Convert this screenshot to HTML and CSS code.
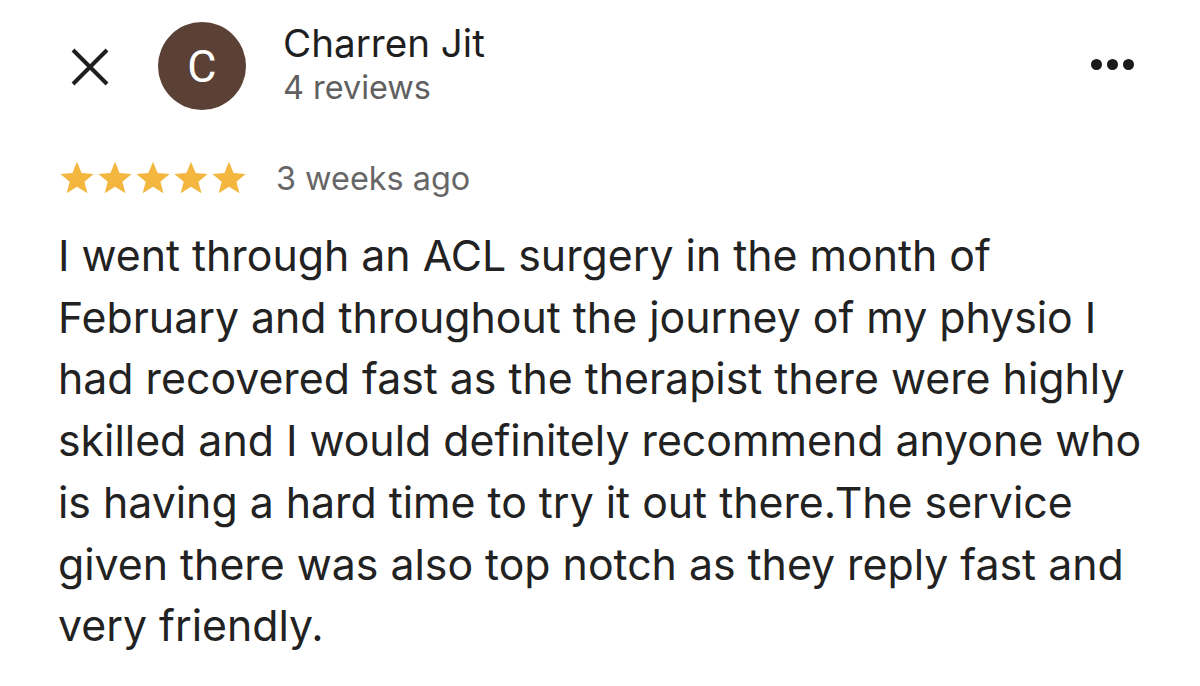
FILE: index.html
```html
<!DOCTYPE html>
<html>
<head>
<meta charset="utf-8">
<link rel="stylesheet" href="styles.css">
</head>
<body>
<div class="card">
  <header class="head">
    <div class="close">
      <svg width="40" height="40" viewBox="0 0 40 40"><path d="M3 3 L37 37 M37 3 L3 37" stroke="#1f1f1f" stroke-width="4" stroke-linecap="butt"/></svg>
    </div>
    <div class="avatar">C</div>
    <div class="who">
      <div class="name">Charren Jit</div>
      <div class="count">4 reviews</div>
    </div>
    <div class="more"><span></span><span></span><span></span></div>
  </header>
  <div class="meta">
    <div class="stars">
      <svg viewBox="0 0 24 24" width="38" height="38"><path d="M12 1.8l2.9 7.1 7.6.5-5.8 4.9 1.9 7.4L12 17.6l-6.5 4.1 1.9-7.4L1.5 9.4l7.6-.5z" fill="#F3B63E"/></svg>
      <svg viewBox="0 0 24 24" width="38" height="38"><path d="M12 1.8l2.9 7.1 7.6.5-5.8 4.9 1.9 7.4L12 17.6l-6.5 4.1 1.9-7.4L1.5 9.4l7.6-.5z" fill="#F3B63E"/></svg>
      <svg viewBox="0 0 24 24" width="38" height="38"><path d="M12 1.8l2.9 7.1 7.6.5-5.8 4.9 1.9 7.4L12 17.6l-6.5 4.1 1.9-7.4L1.5 9.4l7.6-.5z" fill="#F3B63E"/></svg>
      <svg viewBox="0 0 24 24" width="38" height="38"><path d="M12 1.8l2.9 7.1 7.6.5-5.8 4.9 1.9 7.4L12 17.6l-6.5 4.1 1.9-7.4L1.5 9.4l7.6-.5z" fill="#F3B63E"/></svg>
      <svg viewBox="0 0 24 24" width="38" height="38"><path d="M12 1.8l2.9 7.1 7.6.5-5.8 4.9 1.9 7.4L12 17.6l-6.5 4.1 1.9-7.4L1.5 9.4l7.6-.5z" fill="#F3B63E"/></svg>
    </div>
    <span class="when">3 weeks ago</span>
  </div>
  <p class="text">I went through an ACL surgery in the month of<br>February and throughout the journey of my physio I<br>had recovered fast as the therapist there were highly<br>skilled and I would definitely recommend anyone who<br>is having a hard time to try it out there.The service<br>given there was also top notch as they reply fast and<br>very friendly.</p>
</div>
</body>
</html>
```
FILE: styles.css
```css
html, body {
  margin: 0;
  padding: 0;
  background: #ffffff;
}
body {
  font-family: Inter, Roboto, "Liberation Sans", sans-serif;
  color: #222222;
  width: 1200px;
  height: 686px;
  overflow: hidden;
}
.card {
  padding: 22px 0 0 58px;
}
.head {
  display: flex;
  align-items: center;
  height: 88px;
}
.close {
  width: 40px;
  height: 40px;
  margin-left: 12px;
  margin-top: 2px;
}
.close svg { display: block; }
.avatar {
  width: 88px;
  height: 88px;
  border-radius: 50%;
  background: #5b4035;
  color: #fff;
  font-family: Roboto, sans-serif;
  font-weight: 400;
  font-size: 45px;
  display: flex;
  align-items: center;
  justify-content: center;
  margin-left: 48px;
}
.who {
  margin-left: 37px;
  margin-top: -2px;
}
.name {
  font-size: 38.6px;
  line-height: 44px;
  color: #1f1f1f;
}
.count {
  font-size: 32.4px;
  line-height: 45px;
  color: #606060;
}
.more {
  margin-left: auto;
  margin-right: 66px;
  display: flex;
  gap: 5px;
  margin-top: -4px;
}
.more span {
  width: 11px;
  height: 11px;
  border-radius: 50%;
  background: #1a1a1a;
}
.meta {
  display: flex;
  align-items: center;
  margin-top: 48px;
  height: 40px;
}
.stars {
  display: flex;
  gap: 0;
}
.stars svg { display: block; }
.when {
  margin-left: 28px;
  font-size: 32.4px;
  color: #666666;
}
.text {
  margin: 27px 0 0 0;
  font-size: 42.8px;
  line-height: 61.7px;
  color: #222222;
  white-space: nowrap;
}
```
